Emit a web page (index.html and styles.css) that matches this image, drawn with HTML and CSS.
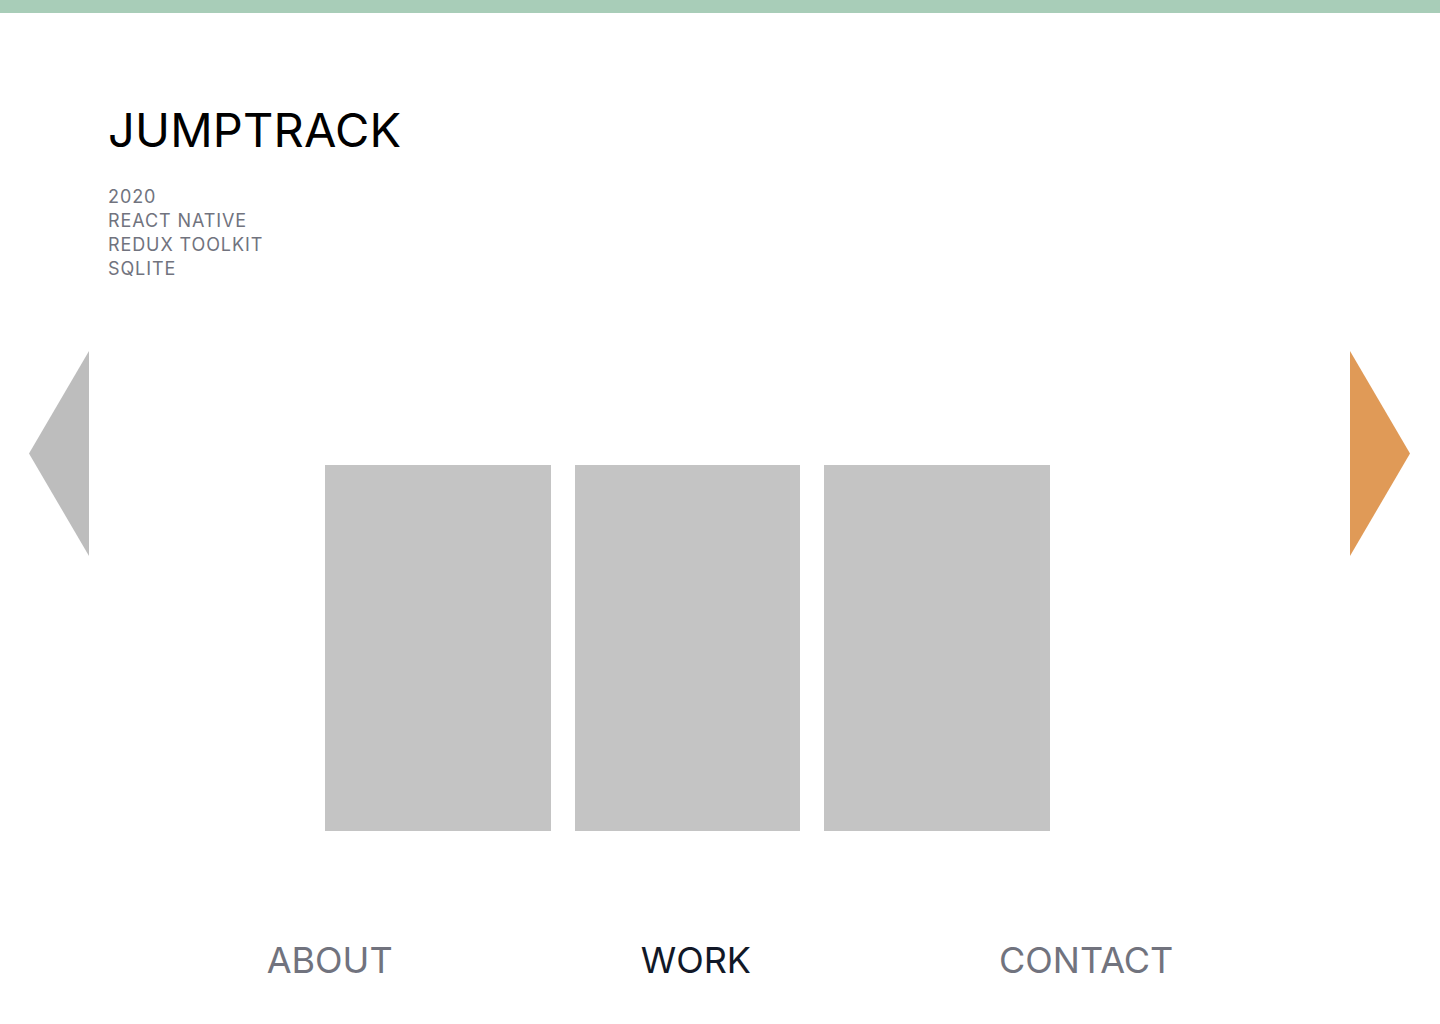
FILE: index.html
```html
<!DOCTYPE html>
<html lang="en">
<head>
<meta charset="utf-8">
<title>Jumptrack</title>
<link rel="stylesheet" href="styles.css">
</head>
<body>
<div class="topbar"></div>
<header class="project">
  <h1 class="title">JUMPTRACK</h1>
  <ul class="meta">
    <li>2020</li>
    <li>REACT NATIVE</li>
    <li>REDUX TOOLKIT</li>
    <li>SQLITE</li>
  </ul>
</header>
<main class="stage">
  <button class="arrow arrow-prev" aria-label="Previous">
    <svg width="60" height="205" viewBox="0 0 60 205"><polygon points="60,0 60,205 0,102.5" fill="#bdbdbd"/></svg>
  </button>
  <div class="cards">
    <div class="card"></div>
    <div class="card"></div>
    <div class="card"></div>
  </div>
  <button class="arrow arrow-next" aria-label="Next">
    <svg width="60" height="205" viewBox="0 0 60 205"><polygon points="0,0 0,205 60,102.5" fill="#e09a57"/></svg>
  </button>
</main>
<nav class="nav">
  <a class="nav-link" href="#">ABOUT</a>
  <a class="nav-link active" href="#">WORK</a>
  <a class="nav-link" href="#">CONTACT</a>
</nav>
</body>
</html>
```
FILE: styles.css
```css
* { box-sizing: border-box; }
html, body { margin: 0; padding: 0; background: #fff; }
body {
  font-family: Inter, "Liberation Sans", sans-serif;
  width: 1440px;
  height: 1024px;
  overflow: hidden;
}
.topbar { height: 13px; background: #a8cdb8; }
.project { padding: 88px 0 0 108px; }
.title {
  margin: 0;
  font-weight: 400;
  font-size: 47px;
  line-height: 58px;
  letter-spacing: 0.2px;
  color: #000;
}
.meta {
  list-style: none;
  margin: 26px 0 0;
  padding: 0;
  font-size: 18px;
  line-height: 24px;
  letter-spacing: 0.9px;
  color: #71737e;
}
.stage {
  position: relative;
  height: 500px;
  margin-top: 70px;
}
.arrow {
  position: absolute;
  top: 0;
  border: 0;
  padding: 0;
  background: none;
  display: block;
  cursor: pointer;
}
.arrow svg { display: block; }
.arrow-prev { left: 29px; }
.arrow-next { right: 30px; }
.cards {
  display: flex;
  gap: 24px;
  padding: 114px 0 0 325px;
}
.card {
  width: 226px;
  height: 366px;
  background: #c4c4c4;
}
.card:nth-child(2) { width: 225px; }
.nav {
  display: flex;
  justify-content: center;
  gap: 248px;
  margin-top: 87px;
}
.nav-link {
  font-size: 36px;
  line-height: 44px;
  color: #71737e;
  text-decoration: none;
}
.nav-link.active { color: #111827; }
```
